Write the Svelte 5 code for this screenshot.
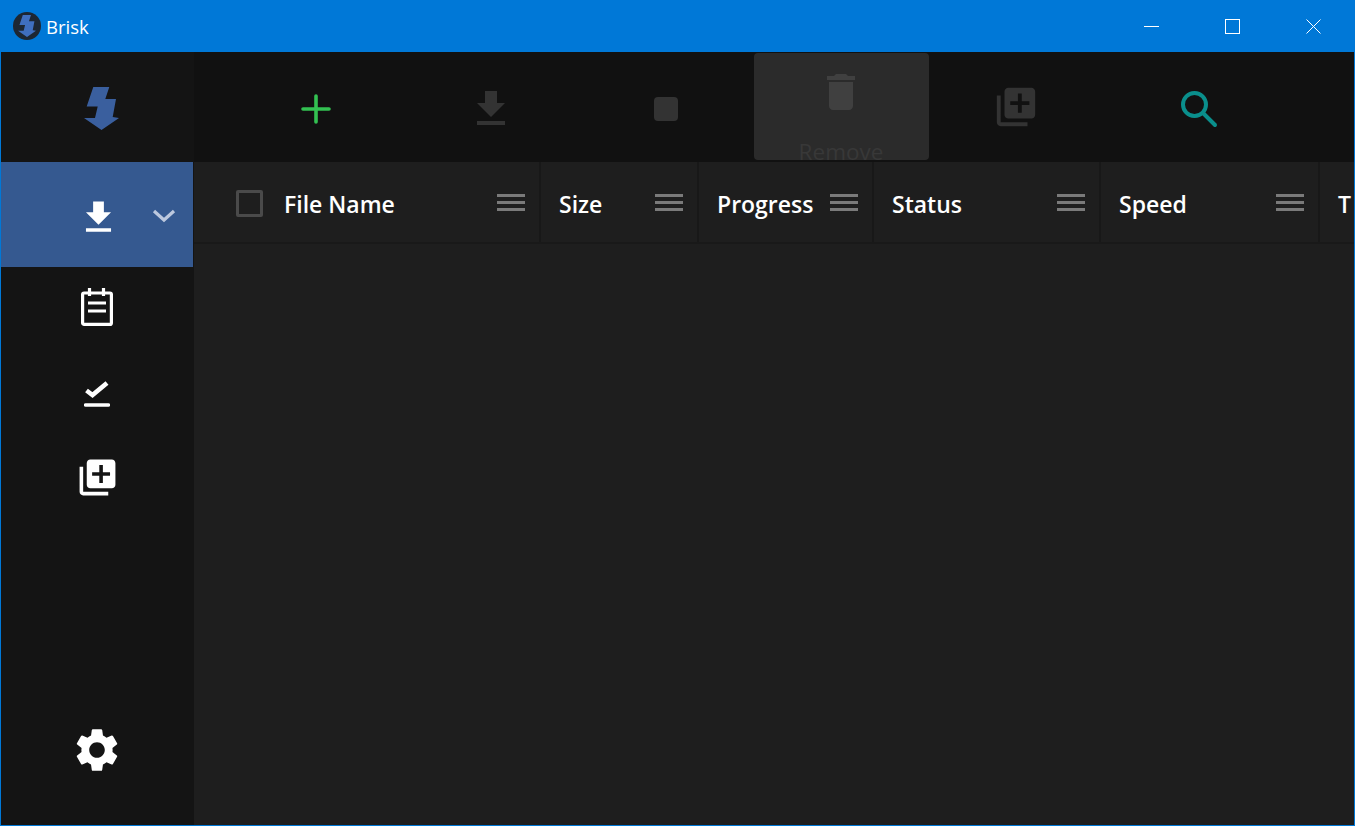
<script>
  const columns = [
    { label: 'File Name', width: 347, check: true },
    { label: 'Size', width: 158 },
    { label: 'Progress', width: 175 },
    { label: 'Status', width: 227 },
    { label: 'Speed', width: 219 },
    { label: 'T', width: 200 }
  ];

  const download = 'M19 9h-4V3H9v6H5l7 7 7-7zM5 18v2h14v-2H5z';
  const library =
    'M4 6H2v14c0 1.1.9 2 2 2h14v-2H4V6zm16-4H8c-1.1 0-2 .9-2 2v12c0 1.1.9 2 2 2h12c1.1 0 2-.9 2-2V4c0-1.1-.9-2-2-2zm-1 9h-4v4h-2v-4H9V9h4V5h2v4h4v2z';
  const trash =
    'M6 19c0 1.1.9 2 2 2h8c1.1 0 2-.9 2-2V7H6v12zM19 4h-3.5l-1-1h-5l-1 1H5v2h14V4z';
  const gear =
    'M19.14 12.94c.04-.3.06-.61.06-.94 0-.32-.02-.64-.07-.94l2.03-1.58c.18-.14.23-.41.12-.61l-1.92-3.32c-.12-.22-.37-.29-.59-.22l-2.39.96c-.5-.38-1.03-.7-1.62-.94l-.36-2.54c-.04-.24-.24-.41-.48-.41h-3.84c-.24 0-.43.17-.47.41l-.36 2.54c-.59.24-1.13.57-1.62.94l-2.39-.96c-.22-.08-.47 0-.59.22L2.74 8.87c-.12.21-.08.47.12.61l2.03 1.58c-.05.3-.09.63-.09.94s.02.64.07.94l-2.03 1.58c-.18.14-.23.41-.12.61l1.92 3.32c.12.22.37.29.59.22l2.39-.96c.5.38 1.03.7 1.62.94l.36 2.54c.05.24.24.41.48.41h3.84c.24 0 .44-.17.47-.41l.36-2.54c.59-.24 1.13-.56 1.62-.94l2.39.96c.22.08.47 0 .59-.22l1.92-3.32c.12-.22.07-.47-.12-.61l-2.01-1.58zM12 15.6c-1.98 0-3.6-1.62-3.6-3.6s1.62-3.6 3.6-3.6 3.6 1.62 3.6 3.6-1.62 3.6-3.6 3.6z';
  const bolt = '9.300,0 25.300,0 21.300,12 32,12 28.700,30 35,31 17.500,43 0,31 11,31 13.700,19.500 2.700,19.500';
</script>

<div class="window">
  <header class="titlebar">
    <div class="app-icon">
      <svg width="18" height="22" viewBox="0 0 35 43"><polygon points={bolt} fill="#3f6fc0" /></svg>
    </div>
    <span class="app-name">Brisk</span>
    <div class="controls">
      <div class="control">
        <svg width="15" height="15" viewBox="0 0 15 15"><path d="M0 7.500h15" stroke="#fff" fill="none" /></svg>
      </div>
      <div class="control">
        <svg width="15" height="15" viewBox="0 0 15 15"><rect x="0.500" y="0.500" width="14" height="14" stroke="#fff" fill="none" /></svg>
      </div>
      <div class="control">
        <svg width="15" height="15" viewBox="0 0 15 15"><path d="M0.500 0.500l14 14M14.500 0.500l-14 14" stroke="#fff" fill="none" /></svg>
      </div>
    </div>
  </header>

  <div class="content">
    <aside class="sidebar">
      <div class="logo">
        <svg width="35" height="43" viewBox="0 0 35 43"><polygon points={bolt} fill="#3a5f9e" /></svg>
      </div>
      <div class="nav-item active">
        <svg width="43" height="43" viewBox="0 0 24 24"><path d={download} fill="#fff" /></svg>
        <svg class="chevron" width="24" height="14" viewBox="0 0 24 14">
          <path d="M2 2l10 9 10-9" fill="none" stroke="#bcc8de" stroke-width="3.200" />
        </svg>
      </div>
      <div class="nav-item notes">
        <svg width="32" height="38" viewBox="0 0 32 38" fill="none" stroke="#fff" stroke-width="3.200">
          <rect x="1.600" y="5" width="28.800" height="31.400" rx="1.500" />
          <path d="M8.500 0v8M22.500 0v8M7 15h18M7 23h18" />
        </svg>
      </div>
      <div class="nav-item">
        <svg width="26" height="28" viewBox="0 0 26 28" fill="none" stroke="#fff">
          <path d="M2.500 11.500l6 4.500L23 4" stroke-width="4.600" />
          <path d="M1.500 26h23" stroke-linecap="round" stroke-width="3.400" />
        </svg>
      </div>
      <div class="nav-item">
        <svg width="43" height="43" viewBox="0 0 24 24"><path d={library} fill="#fff" /></svg>
      </div>
      <div class="nav-item settings">
        <svg width="52" height="52" viewBox="0 0 24 24"><path d={gear} fill="#fff" /></svg>
      </div>
    </aside>

    <main class="main">
      <div class="toolbar">
        <div class="tool">
          <svg width="30" height="30" viewBox="0 0 30 30">
            <path d="M15 2v26M2 15h26" stroke="#33c152" stroke-width="3.600" stroke-linecap="round" />
          </svg>
        </div>
        <div class="tool">
          <svg width="48" height="48" viewBox="0 0 24 24"><path d={download} fill="#333" /></svg>
        </div>
        <div class="tool"><span class="stop"></span></div>
        <div class="tool hovered">
          <svg width="48" height="48" viewBox="0 0 24 24"><path d={trash} fill="#404040" /></svg>
          <span class="tool-label">Remove</span>
        </div>
        <div class="tool raised">
          <svg width="46" height="46" viewBox="0 0 24 24"><path d={library} fill="#333" /></svg>
        </div>
        <div class="tool search">
          <svg width="38" height="38" viewBox="0 0 38 38" fill="none" stroke="#0a8f8c" stroke-width="4">
            <circle cx="14.500" cy="14.500" r="11.500" />
            <path d="M23 23l12 12" stroke-linecap="round" />
          </svg>
        </div>
      </div>

      <div class="table">
        <div class="table-head">
          {#each columns as col}
            <div class="column" style="width: {col.width}px">
              {#if col.check}
                <span class="checkbox"></span>
              {/if}
              <span class="column-label">{col.label}</span>
              <span class="grip"><i></i><i></i><i></i></span>
            </div>
          {/each}
        </div>
      </div>
    </main>
  </div>
</div>

<style>
  :global(body) {
    margin: 0;
    overflow: hidden;
    background: #1e1e1e;
  }

  .window {
    box-sizing: border-box;
    width: 100vw;
    height: 100vh;
    display: flex;
    flex-direction: column;
    border: 1px solid #0078d7;
    border-top: 0;
    font-family: 'Open Sans', 'Noto Sans', sans-serif;
    overflow: hidden;
  }

  .titlebar {
    flex: none;
    height: 52px;
    display: flex;
    align-items: center;
    padding-left: 12px;
    background: #0078d7;
    color: #fff;
  }

  .app-icon {
    width: 28px;
    height: 28px;
    display: flex;
    align-items: center;
    justify-content: center;
    border-radius: 50%;
    background: #1d2733;
  }

  .app-name {
    margin-left: 5px;
    margin-top: 1px;
    font-size: 18.500px;
  }

  .controls {
    display: flex;
    margin-left: auto;
  }

  .control {
    width: 81px;
    height: 52px;
    display: flex;
    align-items: center;
    justify-content: center;
  }

  .control svg {
    margin-top: 1px;
  }

  .content {
    flex: 1;
    min-height: 0;
    display: flex;
  }

  .sidebar {
    flex: none;
    width: 193px;
    display: flex;
    flex-direction: column;
    background: #141414;
  }

  .logo {
    height: 110px;
    display: flex;
    align-items: center;
    justify-content: center;
    padding-left: 8px;
    padding-top: 3px;
    box-sizing: border-box;
  }

  .nav-item {
    position: relative;
    box-sizing: border-box;
    width: 192px;
    height: 84px;
    display: flex;
    align-items: center;
    justify-content: center;
  }

  .nav-item.active {
    height: 105px;
    padding: 6px 0 0 2px;
    background: #355990;
  }

  .nav-item.notes {
    padding-bottom: 4px;
  }

  .chevron {
    position: absolute;
    left: 151px;
    top: 47px;
  }

  .settings {
    margin-top: auto;
    margin-bottom: 33px;
  }

  .main {
    flex: 1;
    min-width: 0;
    display: flex;
    flex-direction: column;
  }

  .toolbar {
    flex: none;
    height: 110px;
    display: flex;
    padding-left: 35px;
    background: #111;
    box-sizing: border-box;
  }

  .tool {
    flex: none;
    width: 175px;
    height: 110px;
    padding: 3px 1px 0 0;
    box-sizing: border-box;
    display: flex;
    flex-direction: column;
    align-items: center;
    justify-content: center;
  }

  .tool svg {
    flex: none;
  }

  .tool.raised {
    padding-top: 0;
  }

  .tool.search {
    margin-left: 8px;
  }

  .tool.hovered {
    height: 107px;
    margin-top: 1px;
    padding-top: 15px;
    justify-content: flex-start;
    overflow: hidden;
    border-radius: 4px;
    background: #2b2b2b;
  }

  .tool-label {
    flex: none;
    margin-top: 21px;
    font-size: 22.500px;
    line-height: 30px;
    color: #383838;
  }

  .stop {
    width: 24px;
    height: 24px;
    border-radius: 4px;
    background: #333;
  }

  .table {
    flex: 1;
    background: #1e1e1e;
    overflow: hidden;
  }

  .table-head {
    height: 82px;
    box-sizing: border-box;
    display: flex;
    border-bottom: 2px solid #191919;
  }

  .column {
    flex: none;
    box-sizing: border-box;
    display: flex;
    align-items: center;
    padding: 3px 14px 0 18px;
    border-right: 2px solid #181818;
  }

  .column-label {
    font-size: 23px;
    font-weight: 600;
    white-space: nowrap;
    color: #fff;
  }

  .checkbox {
    flex: none;
    box-sizing: border-box;
    width: 27px;
    height: 27px;
    margin: -1px 21px 0 24px;
    border: 3px solid #4a4a4a;
    border-radius: 2px;
  }

  .grip {
    flex: none;
    display: flex;
    flex-direction: column;
    gap: 4px;
    width: 28px;
    margin-left: auto;
    margin-top: -3px;
  }

  .grip i {
    display: block;
    height: 3px;
    background: #7a7a7a;
  }
</style>
